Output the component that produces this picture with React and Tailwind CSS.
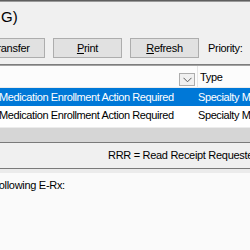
export default function App() {
  return (
    <div className="w-[250px] h-[250px] overflow-hidden bg-[#f0f0f0] font-['Liberation_Sans',Arial,sans-serif] text-[11px] tracking-[-0.3px] text-black flex flex-col">
      <div className="h-[1px] bg-[#5f5f5f] shrink-0" />
      <div className="h-[1px] bg-[#9a9a9a] shrink-0" />
      <div className="pt-[6px] pl-[1px] text-[15px] leading-[17px] tracking-normal h-[23px] shrink-0">G)</div>
      <div className="mt-[13px] h-[20px] flex items-center gap-[8px] shrink-0 whitespace-nowrap">
        <div className="ml-[-24px] w-[69px] h-[20px] shrink-0 bg-[#e1e1e1] border border-[#adadad] flex items-center justify-center">
          Transfer
        </div>
        <div className="w-[69px] h-[20px] shrink-0 bg-[#e1e1e1] border border-[#adadad] flex items-center justify-center">
          <span className="underline">P</span>rint
        </div>
        <div className="w-[69px] h-[20px] shrink-0 bg-[#e1e1e1] border border-[#adadad] flex items-center justify-center">
          <span className="underline">R</span>efresh
        </div>
        <div className="ml-[1px] shrink-0 flex items-center">Priority:</div>
        <div className="ml-[-1px] w-[40px] h-[20px] bg-white border border-[#7a7a7a] shrink-0" />
      </div>
      <div className="mt-[6px] h-[1px] bg-[#7d7d7d] shrink-0" />
      <div className="h-[1px] bg-[#a3a3a3] shrink-0" />
      <div className="bg-white shrink-0">
        <div className="h-[22px] flex items-start bg-[#fcfcfc] border-b border-[#ececec] whitespace-nowrap">
          <div className="w-[179px] h-full shrink-0" />
          <div className="mt-[7px] w-[16px] h-[13px] shrink-0 border border-[#adadad] bg-[#f0f0f0] flex items-center justify-center">
            <svg width="9" height="6" viewBox="0 0 9 6">
              <polyline points="0.5,0.8 4.5,4.8 8.5,0.8" fill="none" stroke="#5a5a5a" strokeWidth="1" />
            </svg>
          </div>
          <div className="ml-[2px] w-[1px] h-full bg-[#e5e5e5] shrink-0" />
          <div className="ml-[2px] pt-[5px] leading-[13px]">Type</div>
        </div>
        <div className="h-[18px] bg-[#0078d7] text-white flex items-center whitespace-nowrap tracking-[-0.4px]">
          <div className="w-[196px] shrink-0 ml-[-1px]">Medication Enrollment Action Required</div>
          <div className="ml-[3px]">Specialty Medication</div>
        </div>
        <div className="h-[19px] flex items-center whitespace-nowrap tracking-[-0.4px]">
          <div className="w-[196px] shrink-0 ml-[-1px]">Medication Enrollment Action Required</div>
          <div className="ml-[3px]">Specialty Medication</div>
        </div>
        <div className="h-[2px] bg-white" />
      </div>
      <div className="h-[1px] bg-[#ececec] shrink-0" />
      <div className="h-[14px] bg-[#d6d6d6] shrink-0" />
      <div className="h-[1px] bg-[#7a7a7a] shrink-0" />
      <div className="h-[25px] bg-[#f0f0f0] flex items-center pl-[108px] whitespace-nowrap shrink-0">
        RRR = Read Receipt Requested
      </div>
      <div className="h-[1px] bg-[#7a7a7a] shrink-0" />
      <div className="h-[4px] bg-[#ebebeb] shrink-0" />
      <div className="flex-1 bg-[#fafafa] pt-[6px] leading-[13px] whitespace-nowrap ml-[-4px]">
        following E-Rx:
      </div>
    </div>
  );
}
